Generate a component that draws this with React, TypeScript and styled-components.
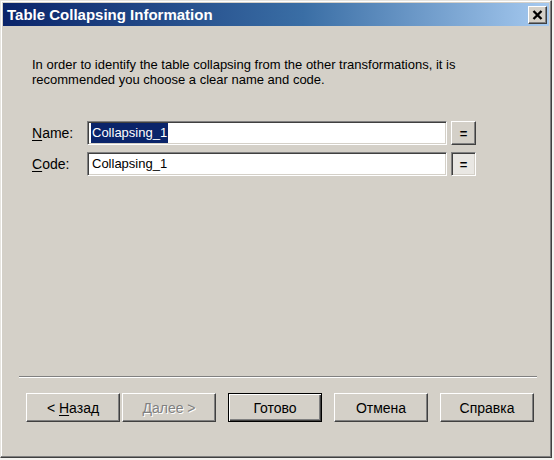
import styled, { createGlobalStyle, css } from "styled-components";

const GlobalStyle = createGlobalStyle`
  html, body {
    margin: 0;
    padding: 0;
    background: #f4f3f0;
  }
  body {
    font-family: "Liberation Sans", Arial, sans-serif;
  }
`;

const face = "#d4d0c8";

const raised = css`
  border-style: solid;
  border-width: 1px;
  border-color: #ffffff #404040 #404040 #ffffff;
  box-shadow: inset -1px -1px 0 #808080, inset 1px 1px 0 ${face};
`;

const sunken = css`
  border-style: solid;
  border-width: 1px;
  border-color: #808080 #ffffff #ffffff #808080;
  box-shadow: inset 1px 1px 0 #404040, inset -1px -1px 0 ${face};
`;

const Window = styled.div`
  box-sizing: border-box;
  width: 552px;
  height: 458px;
  display: flex;
  flex-direction: column;
  padding: 2px;
  background: ${face};
  border-style: solid;
  border-width: 1px;
  border-color: #e6e4df #404040 #404040 #e6e4df;
  box-shadow: inset -1px -1px 0 #808080, inset 1px 1px 0 #ffffff;
`;

const TitleBar = styled.div`
  height: 23px;
  display: flex;
  align-items: center;
  justify-content: space-between;
  padding: 0 2px 0 4px;
  background: linear-gradient(to right, #0a246a 0%, #3a6ea5 55%, #a6caf0 100%);
`;

const Title = styled.span`
  color: #ffffff;
  font-family: "Liberation Sans", Arial, sans-serif;
  font-weight: 700;
  font-size: 15px;
`;

const CloseButton = styled.button`
  box-sizing: border-box;
  width: 19px;
  height: 18px;
  padding: 0;
  display: flex;
  align-items: center;
  justify-content: center;
  background: ${face};
  ${raised};
`;

const Body = styled.div`
  flex: 1;
  display: flex;
  flex-direction: column;
`;

const Description = styled.p`
  margin: 31px 20px 0 29px;
  font-size: 13px;
  line-height: 15px;
  color: #000000;
`;

const Form = styled.div`
  margin: 34px 0 0 29px;
  display: grid;
  grid-template-columns: 55px 360px 29px;
  row-gap: 7px;
  align-items: center;
`;

const Label = styled.label`
  font-size: 14px;
  color: #000000;
`;

const Key = styled.span`
  text-decoration: underline;
  text-underline-offset: 2px;
`;

const TextField = styled.div`
  box-sizing: border-box;
  height: 24px;
  display: flex;
  align-items: center;
  padding: 0 3px;
  background: #ffffff;
  font-size: 13px;
  color: #000000;
  ${sunken};
`;

const Selected = styled.span<{ $selected?: boolean }>`
  padding: 2px 1px 3px;
  ${(p) =>
    p.$selected &&
    css`
      background: #0a246a;
      color: #ffffff;
    `}
`;

const EqualsButton = styled.button<{ $pressed?: boolean }>`
  box-sizing: border-box;
  justify-self: end;
  width: 25px;
  height: 24px;
  padding: 0;
  font-family: "Liberation Sans", Arial, sans-serif;
  font-weight: 700;
  font-size: 13px;
  line-height: 1;
  color: #000000;
  background: ${face};
  ${raised};
  ${(p) =>
    p.$pressed &&
    css`
      background: #e9e7e3;
      ${sunken};
    `}
`;

const Footer = styled.div`
  margin-top: auto;
  padding: 0 12px 33px 16px;
`;

const Separator = styled.div`
  height: 0;
  border-top: 1px solid #808080;
  border-bottom: 1px solid #ffffff;
`;

const ButtonRow = styled.div`
  display: flex;
  gap: 12px;
  margin-top: 15px;
  padding-left: 7px;
`;

const Pair = styled.div`
  display: flex;
  gap: 2px;
`;

const DialogButton = styled.button<{ $default?: boolean; $disabled?: boolean }>`
  box-sizing: border-box;
  width: 94px;
  height: 29px;
  padding: 0;
  font-family: "Liberation Sans", Arial, sans-serif;
  font-size: 14px;
  color: #000000;
  background: ${face};
  ${raised};
  ${(p) =>
    p.$default &&
    css`
      border: 1px solid #000000;
      box-shadow: inset 1px 1px 0 #ffffff, inset -1px -1px 0 #404040,
        inset -2px -2px 0 #808080;
    `}
  ${(p) =>
    p.$disabled &&
    css`
      color: #808080;
      text-shadow: 1px 1px 0 #ffffff;
    `}
`;

export default function App() {
  return (
    <>
      <GlobalStyle />
      <Window>
        <TitleBar>
          <Title>Table Collapsing Information</Title>
          <CloseButton aria-label="Close">
            <svg width="11" height="10" viewBox="0 0 11 10">
              <path d="M1.5 1 L9.5 9 M9.5 1 L1.5 9" stroke="#000" strokeWidth="2.4" />
            </svg>
          </CloseButton>
        </TitleBar>
        <Body>
          <Description>
            In order to identify the table collapsing from the other transformations, it is
            recommended you choose a clear name and code.
          </Description>
          <Form>
            <Label>
              <Key>N</Key>ame:
            </Label>
            <TextField>
              <Selected $selected>Collapsing_1</Selected>
            </TextField>
            <EqualsButton>=</EqualsButton>
            <Label>
              <Key>C</Key>ode:
            </Label>
            <TextField>
              <Selected>Collapsing_1</Selected>
            </TextField>
            <EqualsButton $pressed>=</EqualsButton>
          </Form>
          <Footer>
            <Separator />
            <ButtonRow>
              <Pair>
                <DialogButton>
                  &lt; <Key>Н</Key>азад
                </DialogButton>
                <DialogButton $disabled>
                  <Key>Д</Key>алее &gt;
                </DialogButton>
              </Pair>
              <DialogButton $default>Готово</DialogButton>
              <DialogButton>Отмена</DialogButton>
              <DialogButton>Справка</DialogButton>
            </ButtonRow>
          </Footer>
        </Body>
      </Window>
    </>
  );
}
